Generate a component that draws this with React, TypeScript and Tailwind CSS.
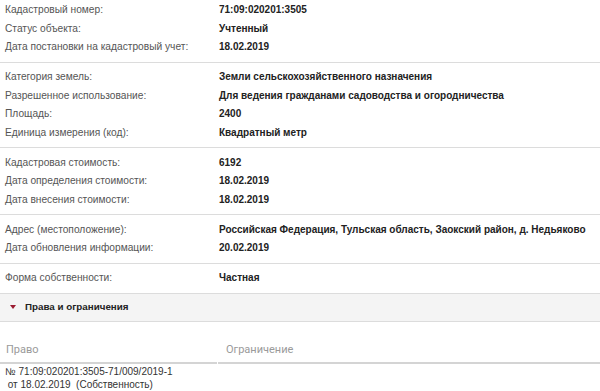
import type { ReactNode } from 'react'

const groups: [string, string][][] = [
  [
    ['Кадастровый номер:', '71:09:020201:3505'],
    ['Статус объекта:', 'Учтенный'],
    ['Дата постановки на кадастровый учет:', '18.02.2019'],
  ],
  [
    ['Категория земель:', 'Земли сельскохозяйственного назначения'],
    ['Разрешенное использование:', 'Для ведения гражданами садоводства и огородничества'],
    ['Площадь:', '2400'],
    ['Единица измерения (код):', 'Квадратный метр'],
  ],
  [
    ['Кадастровая стоимость:', '6192'],
    ['Дата определения стоимости:', '18.02.2019'],
    ['Дата внесения стоимости:', '18.02.2019'],
  ],
  [
    ['Адрес (местоположение):', 'Российская Федерация, Тульская область, Заокский район, д. Недьяково'],
    ['Дата обновления информации:', '20.02.2019'],
  ],
  [['Форма собственности:', 'Частная']],
]

function Group({ rows, first }: { rows: [string, string][]; first?: boolean }) {
  return (
    <div className={`border-b border-[#dcdcdc] pb-[5px] ${first ? 'pt-[1px]' : 'pt-[5.5px]'}`}>
      {rows.map(([label, value]) => (
        <div key={label} className="grid grid-cols-[219px_1fr] items-center leading-[18.5px]">
          <span className="pl-[5px] text-[10.2px] text-[#555]">{label}</span>
          <span className="whitespace-nowrap text-[10px] font-bold text-[#222]">{value}</span>
        </div>
      ))}
    </div>
  )
}

function Th({ children, className }: { children: ReactNode; className: string }) {
  return (
    <div
      className={`border-b-2 border-[#d4d4d4] pb-[6px] font-['Roboto',Arial,sans-serif] text-[11px] leading-[13px] text-[#9a9a9a] ${className}`}
    >
      {children}
    </div>
  )
}

export default function App() {
  return (
    <div className="h-[391px] w-[600px] overflow-hidden bg-white font-['Liberation_Sans',Arial,sans-serif]">
      {groups.map((rows, i) => (
        <Group key={i} rows={rows} first={i === 0} />
      ))}
      <div className="flex h-[28px] items-center gap-[9px] border-b border-[#dcdcdc] bg-[#f4f4f4] pl-[10px]">
        <span className="h-0 w-0 border-x-[3px] border-t-[4px] border-x-transparent border-t-[#9b1b30]" />
        <span className="text-[9.8px] font-bold text-[#222]">Права и ограничения</span>
      </div>
      <div className="mt-[21px] grid grid-cols-[217px_1fr] gap-x-[1px]">
        <Th className="pl-[6px]">Право</Th>
        <Th className="pl-[8px]">Ограничение</Th>
      </div>
      <div className="border-b border-[#e0e0e0] pb-[2px] pl-[5px] pt-[1.5px] text-[10px] leading-[13px] text-[#333]">
        <div>№ 71:09:020201:3505-71/009/2019-1</div>
        <div>&nbsp;от 18.02.2019 &nbsp;(Собственность)</div>
      </div>
    </div>
  )
}
